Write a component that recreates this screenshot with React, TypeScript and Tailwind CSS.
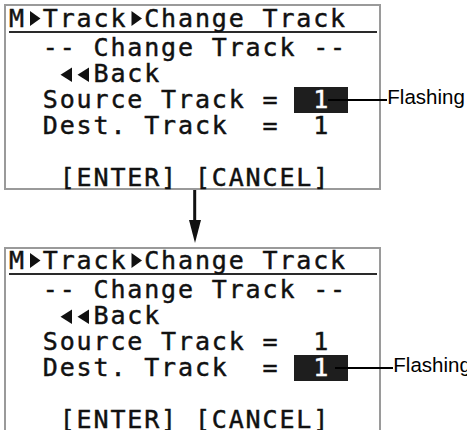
import React from "react";

const CELL = "w-[16.9px]";

function TriRight({ x0 }: { x0: number }) {
  return (
    <svg className={`inline-block align-top ${CELL} h-[24px]`} width="16.9" height="24" viewBox="0 0 16.9 24">
      <polygon points={`${x0},4 ${x0},19 ${x0 + 10.5},11.5`} fill="#111" />
    </svg>
  );
}

function TriLeft() {
  return (
    <svg className={`inline-block align-top ${CELL} h-[26px]`} width="16.9" height="26" viewBox="0 0 16.9 26">
      <polygon points="12,6.5 12,21 0.5,13.75" fill="#111" />
    </svg>
  );
}

function Value({ flash, lineLeft, lineWidth, labelLeft }: { flash: boolean; lineLeft: number; lineWidth: number; labelLeft: number }) {
  if (!flash) return <span> 1</span>;
  return (
    <span className="relative inline-block align-top h-[26px] -ml-[2px] pl-[2px] pr-[1px] bg-[#1e1e1e] text-white">
      {" 1 "}
      <span
        className="absolute top-[12px] h-[2px] bg-black"
        style={{ left: lineLeft, width: lineWidth }}
      />
      <span
        className="absolute top-[0px] whitespace-nowrap font-['Liberation_Sans',Arial,sans-serif] text-[20.5px] leading-[20.5px] tracking-normal text-black [-webkit-text-stroke:0px]"
        style={{ left: labelLeft }}
      >
        Flashing
      </span>
    </span>
  );
}

function Panel({ which, pt, height }: { which: "source" | "dest"; pt: string; height: string }) {
  const isSource = which === "source";
  const callout = isSource
    ? { lineLeft: 34, lineWidth: 59, labelLeft: 93 }
    : { lineLeft: 41, lineWidth: 58, labelLeft: 99 };
  return (
    <div className={`ml-[4px] w-[377px] ${height} border-2 border-[#9a9a9a] ${pt} flex flex-col text-[#111] font-['DejaVu_Sans_Mono',monospace] text-[25px] tracking-[1.85px] whitespace-pre [-webkit-text-stroke:0.45px_currentColor]`}>
      <div className="ml-[3px] mr-[2px] h-[26px] leading-[24px] border-b-2 border-[#2a2a2a]">
        <span>M</span>
        <TriRight x0={4} />
        <span>Track</span>
        <TriRight x0={4.5} />
        <span>Change Track</span>
      </div>
      <div className="ml-[3px] mt-[2px] flex flex-col">
        <div className="h-[26px] leading-[26px]">{"  -- Change Track --"}</div>
        <div className="h-[26px] leading-[26px]">
          {"   "}
          <TriLeft />
          <TriLeft />
          {"Back"}
        </div>
        <div className="h-[26px] leading-[26px]">
          {"  Source Track = "}
          <Value flash={isSource} {...callout} />
        </div>
        <div className="h-[26px] leading-[26px]">
          {"  Dest. Track  = "}
          <Value flash={!isSource} {...callout} />
        </div>
        <div className="h-[26px] leading-[26px]"> </div>
        <div className="h-[26px] leading-[26px]">{"   [ENTER] [CANCEL]"}</div>
      </div>
    </div>
  );
}

export default function App() {
  return (
    <div className="w-[467px] h-[430px] bg-white overflow-hidden relative">
      <div className="pt-[4px]">
        <Panel which="source" pt="pt-[0.5px]" height="h-[186px]" />
        <div className="h-[57px]">
          <svg className="block ml-[188px]" width="14" height="57" viewBox="0 0 14 57">
            <rect x="5.2" y="0" width="3" height="32" fill="#111" />
            <polygon points="1,30 13,30 7,53" fill="#111" />
          </svg>
        </div>
        <Panel which="dest" pt="pt-[0px]" height="h-[200px]" />
      </div>
    </div>
  );
}
